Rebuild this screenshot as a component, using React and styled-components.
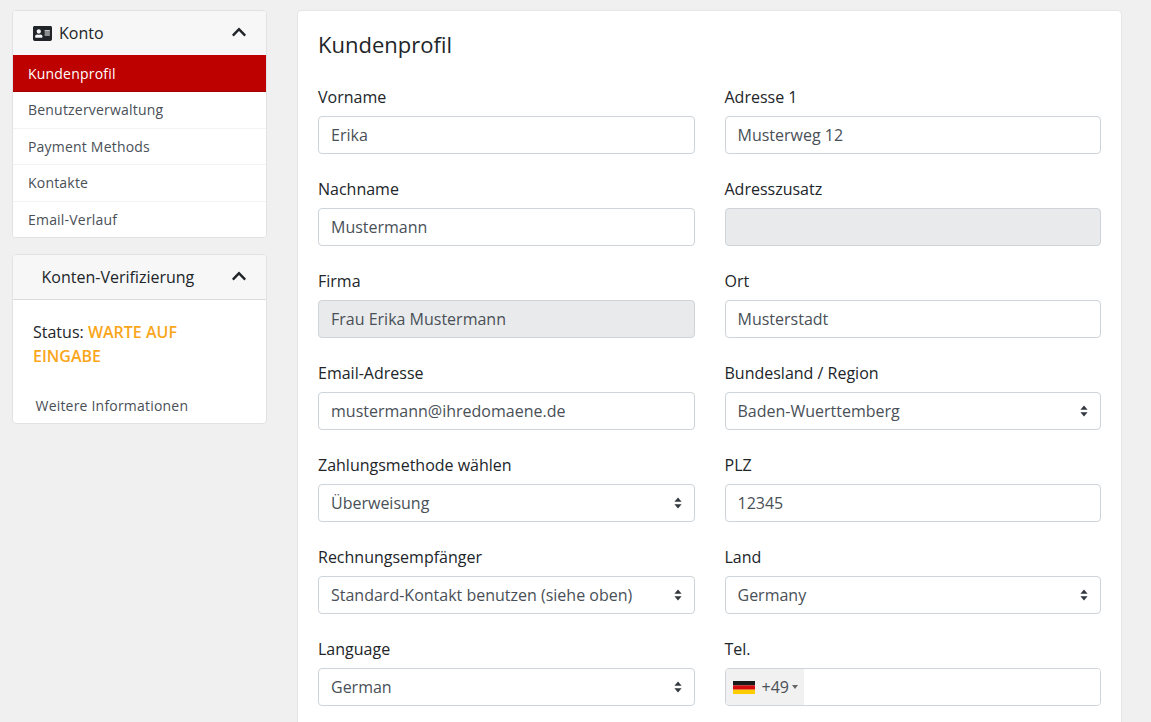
import React from 'react'
import styled, { createGlobalStyle } from 'styled-components'
import { FaAddressCard, FaChevronUp } from 'react-icons/fa'

const GlobalStyle = createGlobalStyle`
  html, body {
    margin: 0;
    padding: 0;
    height: 722px;
    overflow: hidden;
    background: #f0f0f0;
  }
  body, input, select {
    font-family: "Open Sans", "Liberation Sans", sans-serif;
  }
  * {
    box-sizing: border-box;
  }
`

const menuItems = [
  { id: 1, title: 'Kundenprofil', active: true },
  { id: 2, title: 'Benutzerverwaltung' },
  { id: 3, title: 'Payment Methods' },
  { id: 4, title: 'Kontakte' },
  { id: 5, title: 'Email-Verlauf' },
]

const leftFields = [
  { label: 'Vorname', value: 'Erika' },
  { label: 'Nachname', value: 'Mustermann' },
  { label: 'Firma', value: 'Frau Erika Mustermann', disabled: true },
  { label: 'Email-Adresse', value: 'mustermann@ihredomaene.de' },
  { label: 'Zahlungsmethode wählen', value: 'Überweisung', select: true },
  { label: 'Rechnungsempfänger', value: 'Standard-Kontakt benutzen (siehe oben)', select: true },
  { label: 'Language', value: 'German', select: true },
]

const rightFields = [
  { label: 'Adresse 1', value: 'Musterweg 12' },
  { label: 'Adresszusatz', value: '', disabled: true },
  { label: 'Ort', value: 'Musterstadt' },
  { label: 'Bundesland / Region', value: 'Baden-Wuerttemberg', select: true },
  { label: 'PLZ', value: '12345' },
  { label: 'Land', value: 'Germany', select: true },
  { label: 'Tel.', phone: true },
]

function Field({ field }) {
  return (
    <FieldGroup>
      <Label>{field.label}</Label>
      {field.select && (
        <SelectWrap>
          <Select defaultValue={field.value}>
            <option>{field.value}</option>
          </Select>
          <SelectArrows width="8" height="12" viewBox="0 0 8 12">
            <path d="M4 0.5 L7.6 4.8 H0.4 Z M4 11.5 L7.6 7.2 H0.4 Z" fill="#343a40" />
          </SelectArrows>
        </SelectWrap>
      )}
      {field.phone && (
        <PhoneBox>
          <DialCode>
            <Flag width="22" height="13" viewBox="0 0 22 13">
              <rect width="22" height="4.4" fill="#1a1a1a" />
              <rect y="4.4" width="22" height="4.3" fill="#d60a0a" />
              <rect y="8.7" width="22" height="4.3" fill="#fc0" />
            </Flag>
            <span>+49</span>
            <Caret />
          </DialCode>
          <PhoneInput type="tel" />
        </PhoneBox>
      )}
      {!field.select && !field.phone && (
        <Input defaultValue={field.value} disabled={field.disabled} />
      )}
    </FieldGroup>
  )
}

export default function App() {
  return (
    <>
      <GlobalStyle />
      <Page>
        <Sidebar>
          <SideCard>
            <CardHeader>
              <HeaderTitle>
                <FaAddressCard size={19} color="#212529" />
                <span>Konto</span>
              </HeaderTitle>
              <Chevron />
            </CardHeader>
            <Menu>
              {menuItems.map((item) => (
                <MenuItem key={item.id} $active={item.active}>
                  {item.title}
                </MenuItem>
              ))}
            </Menu>
          </SideCard>
          <SideCard>
            <VerifyHeader>
              <VerifyTitle>Konten-Verifizierung</VerifyTitle>
              <Chevron />
            </VerifyHeader>
            <VerifyBody>
              <Status>
                Status: <strong>WARTE AUF EINGABE</strong>
              </Status>
              <MoreInfo>Weitere Informationen</MoreInfo>
            </VerifyBody>
          </SideCard>
        </Sidebar>
        <Main>
          <Title>Kundenprofil</Title>
          <FormGrid>
            <Column>
              {leftFields.map((field) => (
                <Field key={field.label} field={field} />
              ))}
            </Column>
            <Column>
              {rightFields.map((field) => (
                <Field key={field.label} field={field} />
              ))}
            </Column>
          </FormGrid>
        </Main>
      </Page>
    </>
  )
}

const Page = styled.div`
  display: flex;
  align-items: flex-start;
  gap: 30px;
  padding: 10px 29px 0 12px;
  height: 722px;
  overflow: hidden;
`

const Sidebar = styled.aside`
  width: 255px;
  flex-shrink: 0;
  display: flex;
  flex-direction: column;
  gap: 16px;
`

const SideCard = styled.section`
  background: #fff;
  border: 1px solid #e2e2e2;
  border-radius: 4px;
  overflow: hidden;
`

const CardHeader = styled.header`
  height: 44px;
  padding: 0 19px 0 20px;
  background: #f7f7f7;
  display: flex;
  align-items: center;
  justify-content: space-between;
`

const Chevron = styled(FaChevronUp)`
  width: 16px;
  height: 16px;
  color: #212529;
  margin-top: -3px;
`

const HeaderTitle = styled.div`
  display: flex;
  align-items: center;
  gap: 7px;
  font-size: 16px;
  color: #212529;
`

const Menu = styled.ul`
  list-style: none;
  margin: 0;
  padding: 0;
`

const MenuItem = styled.li`
  height: ${(p) => (p.$active ? '37px' : '36.5px')};
  padding-left: 15px;
  display: flex;
  align-items: center;
  font-size: 14px;
  letter-spacing: 0.2px;
  color: ${(p) => (p.$active ? '#fff' : '#495057')};
  background: ${(p) => (p.$active ? '#bd0000' : '#fff')};
  border-bottom: 1px solid ${(p) => (p.$active ? '#a00000' : '#f3f3f3')};
  &:last-child {
    height: 35.5px;
    border-bottom: 0;
  }
`

const VerifyHeader = styled(CardHeader)`
  height: 45px;
  border-bottom: 1px solid #dcdcdc;
  padding-left: 28.5px;
`

const VerifyTitle = styled.div`
  font-size: 16px;
  color: #212529;
`

const VerifyBody = styled.div`
  padding: 20px 20px 7px;
`

const Status = styled.p`
  margin: 0;
  font-size: 16px;
  line-height: 24px;
  color: #212529;
  strong {
    color: #f9a61a;
    font-weight: 600;
  }
`

const MoreInfo = styled.div`
  margin: 27px 0 0 2.5px;
  font-size: 14px;
  line-height: 21px;
  letter-spacing: 0.2px;
  color: #495057;
`

const Main = styled.main`
  flex: 1;
  min-height: 900px;
  background: #fff;
  border: 1px solid #e6e6e6;
  border-radius: 4px;
  padding: 19px 20px 20px;
`

const Title = styled.h1`
  margin: 0 0 27px;
  font-size: 22px;
  line-height: 29px;
  font-weight: 400;
  color: #212529;
`

const FormGrid = styled.div`
  display: grid;
  grid-template-columns: 1fr 1fr;
  column-gap: 30px;
`

const Column = styled.div`
  display: flex;
  flex-direction: column;
  gap: 24px;
`

const FieldGroup = styled.div`
  display: flex;
  flex-direction: column;
  gap: 8px;
`

const Label = styled.label`
  font-size: 16px;
  line-height: 22px;
  color: #212529;
`

const Input = styled.input`
  width: 100%;
  height: 38px;
  padding: 6px 12px;
  font-size: 16px;
  color: #495057;
  background: #fff;
  border: 1px solid #ced4da;
  border-radius: 4px;
  outline: none;
  &:disabled {
    background: #e9eaec;
    color: #495057;
    opacity: 1;
  }
`

const SelectWrap = styled.div`
  position: relative;
`

const Select = styled.select`
  width: 100%;
  height: 38px;
  padding: 6px 28px 6px 12px;
  font-size: 16px;
  color: #495057;
  background: #fff;
  border: 1px solid #ced4da;
  border-radius: 4px;
  outline: none;
  appearance: none;
`

const SelectArrows = styled.svg`
  position: absolute;
  right: 13px;
  top: 13px;
  pointer-events: none;
`

const PhoneBox = styled.div`
  height: 38px;
  display: flex;
  border: 1px solid #ced4da;
  border-radius: 4px;
  overflow: hidden;
  background: #fff;
`

const DialCode = styled.div`
  width: 78px;
  flex-shrink: 0;
  padding-left: 7px;
  display: flex;
  align-items: center;
  background: #f1f1f1;
  font-size: 16px;
  color: #495057;
  span {
    margin-left: 7px;
  }
`

const Flag = styled.svg`
  flex-shrink: 0;
`

const Caret = styled.i`
  margin-left: 3px;
  width: 0;
  height: 0;
  border-left: 3px solid transparent;
  border-right: 3px solid transparent;
  border-top: 4px solid #666;
`

const PhoneInput = styled.input`
  flex: 1;
  min-width: 0;
  border: 0;
  outline: none;
  font-size: 16px;
  padding: 0 12px;
`
